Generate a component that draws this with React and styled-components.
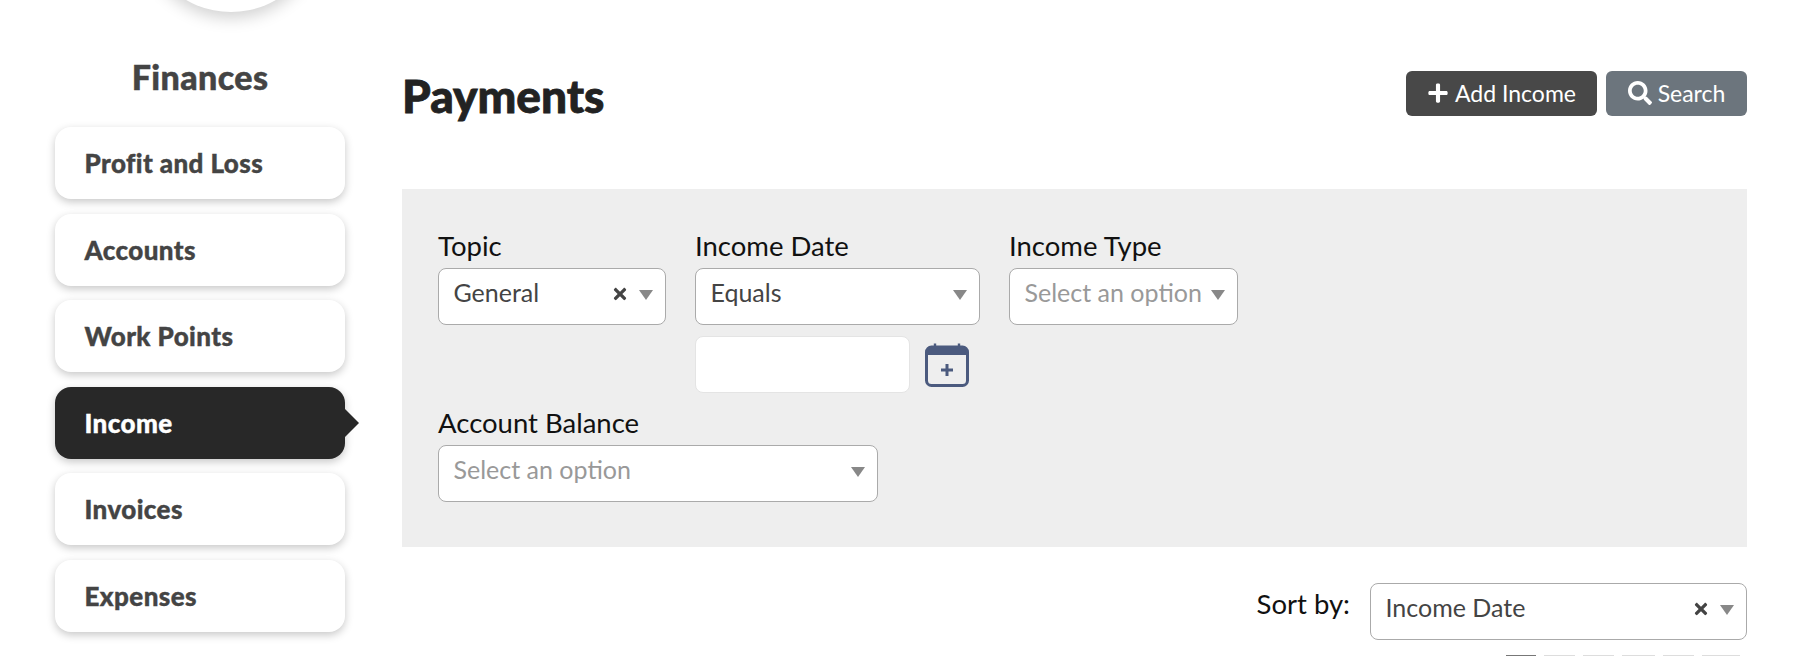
import React from "react";
import styled, { createGlobalStyle } from "styled-components";
import { FaPlus, FaSearch, FaTimes } from "react-icons/fa";

const Global = createGlobalStyle`
  html, body { margin: 0; padding: 0; height: 656px; overflow: hidden; background: #fff; }
  body { font-family: "Lato", "Liberation Sans", sans-serif; }
  * { box-sizing: border-box; }
`;

const Page = styled.div`
  display: flex;
  height: 656px;
  overflow: hidden;
  padding: 0 71px 0 55px;
`;

const Sidebar = styled.aside`
  width: 290px;
  flex: none;
  margin-right: 57px;
`;

const Avatar = styled.div`
  width: 180px;
  height: 180px;
  margin: -168px 0 0 86px;
  border-radius: 50%;
  background: #fff;
  box-shadow: 0 6px 16px rgba(0, 0, 0, 0.18);
`;

const SideTitle = styled.h2`
  margin: 42px 0 0;
  height: 45px;
  font-size: 34px;
  line-height: 45px;
  font-weight: 900;
  text-align: center;
  color: #444;
  letter-spacing: 0.4px;
  -webkit-text-stroke: 0.5px #444;
`;

const Nav = styled.nav`
  display: flex;
  flex-direction: column;
  gap: 14.5px;
  margin-top: 28px;
`;

const NavItem = styled.a`
  position: relative;
  display: flex;
  align-items: center;
  height: 72px;
  padding-left: 29.5px;
  border-radius: 16px;
  font-size: 26px;
  font-weight: 900;
  letter-spacing: 0.4px;
  -webkit-text-stroke: 0.4px ${(p) => (p.$active ? "#fff" : "#444")};
  color: ${(p) => (p.$active ? "#fff" : "#444")};
  background: ${(p) => (p.$active ? "#282828" : "#fff")};
  box-shadow: 0 3px 8px rgba(0, 0, 0, 0.22);

  ${(p) =>
    p.$active &&
    `&::after {
      content: "";
      position: absolute;
      left: 100%;
      top: 22px;
      border-left: 14px solid #282828;
      border-top: 14px solid transparent;
      border-bottom: 14px solid transparent;
    }`}
`;

const Main = styled.main`
  flex: 1;
  min-width: 0;
`;

const Header = styled.header`
  display: flex;
  justify-content: space-between;
  align-items: flex-start;
  height: 189px;
  padding-top: 71px;
`;

const Title = styled.h1`
  margin: -2px 0 0;
  font-size: 46px;
  line-height: 54px;
  font-weight: 900;
  color: #222;
  letter-spacing: 0;
  -webkit-text-stroke: 0.8px #222;
`;

const Actions = styled.div`
  display: flex;
  gap: 9px;
`;

const Button = styled.button`
  display: flex;
  align-items: center;
  justify-content: center;
  gap: 6px;
  width: ${(p) => p.$w}px;
  height: 45px;
  border: 0;
  border-radius: 6px;
  padding: 0 0 2px;
  font-family: inherit;
  font-size: 23px;
  color: #fff;
  background: ${(p) => p.$bg};
`;

const Panel = styled.section`
  height: 358px;
  padding: 47px 36px 0;
  background: #eee;
`;

const Row = styled.div`
  display: flex;
  gap: 29px;
  align-items: flex-start;
`;

const SecondRow = styled(Row)`
  margin-top: 20px;
`;

const Field = styled.div`
  width: ${(p) => p.$w}px;
`;

const Label = styled.label`
  display: block;
  height: 32px;
  font-size: 27.5px;
  line-height: 20px;
  color: #111;
  white-space: nowrap;
`;

const SelectBox = styled.div`
  position: relative;
  width: ${(p) => (p.$w ? `${p.$w}px` : "100%")};
  height: 57px;
  padding: 5px 14.5px 0;
  background: #fff;
  border: 1px solid #aaa;
  border-radius: 8px;
  font-size: 25px;
  line-height: 36px;
  white-space: nowrap;
  color: ${(p) => (p.$placeholder ? "#999" : "#444")};
`;

const Caret = styled.span`
  position: absolute;
  right: 12px;
  top: 21px;
  border-top: 10px solid #888;
  border-left: 7px solid transparent;
  border-right: 7px solid transparent;
`;

const Clear = styled.span`
  position: absolute;
  right: 36px;
  top: 16px;
  display: flex;
  font-size: 18px;
  color: #444;
  stroke: #444;
  stroke-width: 30px;
`;

const DateRow = styled.div`
  display: flex;
  align-items: center;
  gap: 15px;
  margin-top: 11px;
`;

const DateInput = styled.div`
  width: 215px;
  height: 57px;
  background: #fff;
  border: 1px solid #e4e4e4;
  border-radius: 8px;
`;

const SortRow = styled.div`
  display: flex;
  justify-content: flex-end;
  align-items: flex-start;
  gap: 20px;
  margin-top: 36px;
`;

const SortLabel = styled.span`
  font-size: 27.5px;
  line-height: 36px;
  margin-top: 3px;
  color: #111;
`;

const Pager = styled.div`
  display: flex;
  justify-content: flex-end;
  gap: 8px;
  margin: 15px 7px 0 0;
`;

const PageBox = styled.span`
  width: ${(p) => p.$w}px;
  height: 32px;
  border: 1px solid #ddd;
  background: ${(p) => (p.$active ? "#777" : "#fff")};
  border-color: ${(p) => (p.$active ? "#777" : "#ddd")};
`;

const CalendarIcon = () => (
  <svg width="44" height="44" viewBox="0 0 44 44" fill="none" aria-hidden="true">
    <path d="M10 0.5v5M34 0.5v5" stroke="#4b5a7e" strokeWidth="2.4" />
    <path d="M1.5 12V8a5 5 0 0 1 5-5h31a5 5 0 0 1 5 5v4z" fill="#4b5a7e" />
    <rect x="1.5" y="4" width="41" height="38.5" rx="5" stroke="#4b5a7e" strokeWidth="3" />
    <path d="M22 21v12M16 27h12" stroke="#4b5a7e" strokeWidth="3" />
  </svg>
);

const Select = ({ value, placeholder, clearable, w }) => (
  <SelectBox $w={w} $placeholder={!!placeholder}>
    {value || placeholder}
    {clearable && (
      <Clear>
        <FaTimes />
      </Clear>
    )}
    <Caret />
  </SelectBox>
);

const items = ["Profit and Loss", "Accounts", "Work Points", "Income", "Invoices", "Expenses"];
const pages = [30, 30.5, 31, 33, 31, 38.5];

export default function App() {
  return (
    <>
      <Global />
      <Page>
        <Sidebar>
          <Avatar />
          <SideTitle>Finances</SideTitle>
          <Nav>
            {items.map((t) => (
              <NavItem key={t} $active={t === "Income"}>
                {t}
              </NavItem>
            ))}
          </Nav>
        </Sidebar>
        <Main>
          <Header>
            <Title>Payments</Title>
            <Actions>
              <Button $w={191} $bg="#484848">
                <FaPlus size={22} />
                Add Income
              </Button>
              <Button $w={141} $bg="#6c757d">
                <FaSearch size={24} />
                Search
              </Button>
            </Actions>
          </Header>
          <Panel>
            <Row>
              <Field $w={228}>
                <Label>Topic</Label>
                <Select value="General" clearable />
              </Field>
              <Field $w={285}>
                <Label>Income Date</Label>
                <Select value="Equals" />
                <DateRow>
                  <DateInput />
                  <CalendarIcon />
                </DateRow>
              </Field>
              <Field $w={229}>
                <Label>Income Type</Label>
                <Select placeholder="Select an option" />
              </Field>
            </Row>
            <SecondRow>
              <Field $w={440}>
                <Label>Account Balance</Label>
                <Select placeholder="Select an option" />
              </Field>
            </SecondRow>
          </Panel>
          <SortRow>
            <SortLabel>Sort by:</SortLabel>
            <Select value="Income Date" clearable w={377} />
          </SortRow>
          <Pager>
            {pages.map((w, i) => (
              <PageBox key={i} $w={w} $active={i === 0} />
            ))}
          </Pager>
        </Main>
      </Page>
    </>
  );
}
